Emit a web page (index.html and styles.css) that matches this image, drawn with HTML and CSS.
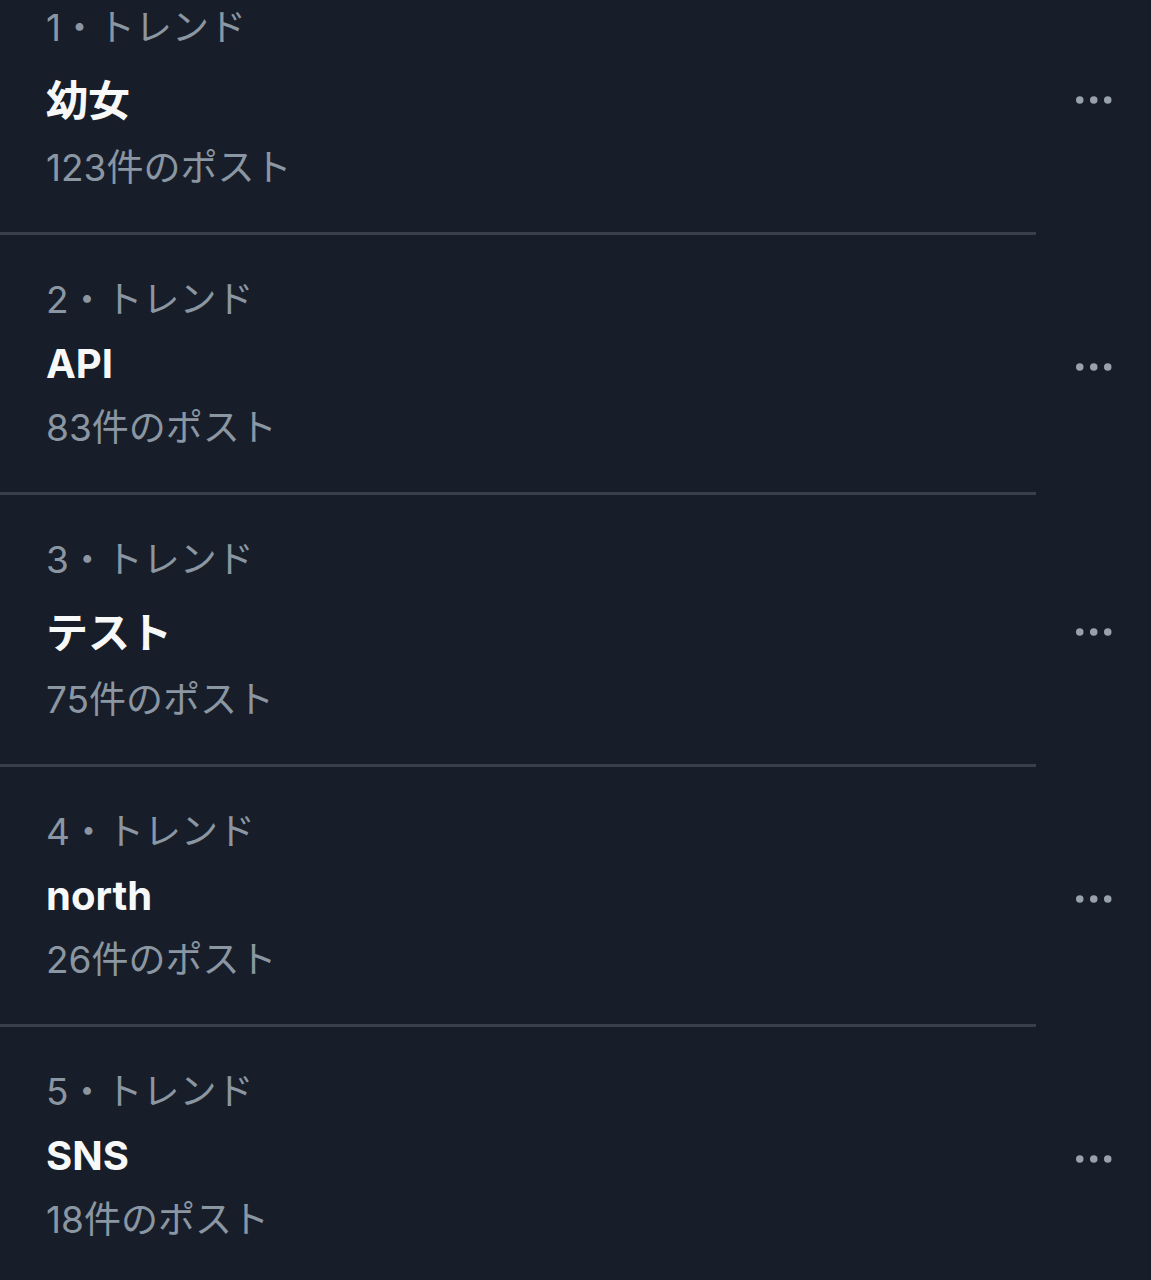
FILE: index.html
```html
<!DOCTYPE html>
<html lang="ja">
<head>
    <meta charset="UTF-8">
    <meta name="viewport" content="width=device-width, initial-scale=1.0">
    <title>トレンド</title>
    <link rel="stylesheet" href="styles.css">
</head>
<body>
    <ul class="trends">
        <li class="trend trend--ja">
            <div class="trend-body">
                <div class="trend-meta">1・トレンド</div>
                <div class="trend-name">幼女</div>
                <div class="trend-count">123件のポスト</div>
            </div>
            <button class="trend-more" aria-label="その他">
                <svg width="36" height="8" viewBox="0 0 36 8"><circle cx="3.75" cy="4" r="3.75"/><circle cx="17.75" cy="4" r="3.75"/><circle cx="31.75" cy="4" r="3.75"/></svg>
            </button>
        </li>
        <li class="trend">
            <div class="trend-body">
                <div class="trend-meta">2・トレンド</div>
                <div class="trend-name">API</div>
                <div class="trend-count">83件のポスト</div>
            </div>
            <button class="trend-more" aria-label="その他">
                <svg width="36" height="8" viewBox="0 0 36 8"><circle cx="3.75" cy="4" r="3.75"/><circle cx="17.75" cy="4" r="3.75"/><circle cx="31.75" cy="4" r="3.75"/></svg>
            </button>
        </li>
        <li class="trend trend--ja">
            <div class="trend-body">
                <div class="trend-meta">3・トレンド</div>
                <div class="trend-name">テスト</div>
                <div class="trend-count">75件のポスト</div>
            </div>
            <button class="trend-more" aria-label="その他">
                <svg width="36" height="8" viewBox="0 0 36 8"><circle cx="3.75" cy="4" r="3.75"/><circle cx="17.75" cy="4" r="3.75"/><circle cx="31.75" cy="4" r="3.75"/></svg>
            </button>
        </li>
        <li class="trend">
            <div class="trend-body">
                <div class="trend-meta">4・トレンド</div>
                <div class="trend-name">north</div>
                <div class="trend-count">26件のポスト</div>
            </div>
            <button class="trend-more" aria-label="その他">
                <svg width="36" height="8" viewBox="0 0 36 8"><circle cx="3.75" cy="4" r="3.75"/><circle cx="17.75" cy="4" r="3.75"/><circle cx="31.75" cy="4" r="3.75"/></svg>
            </button>
        </li>
        <li class="trend">
            <div class="trend-body">
                <div class="trend-meta">5・トレンド</div>
                <div class="trend-name">SNS</div>
                <div class="trend-count">18件のポスト</div>
            </div>
            <button class="trend-more" aria-label="その他">
                <svg width="36" height="8" viewBox="0 0 36 8"><circle cx="3.75" cy="4" r="3.75"/><circle cx="17.75" cy="4" r="3.75"/><circle cx="31.75" cy="4" r="3.75"/></svg>
            </button>
        </li>
    </ul>
</body>
</html>
```

FILE: styles.css
```css
body {
    margin: 0;
    background-color: #181e29;
    font-family: Inter, "Noto Sans CJK JP", sans-serif;
    overflow: hidden;
}
.trends {
    list-style: none;
    margin: -37px 0 0 0;
    padding: 0;
}
.trend {
    display: flex;
    align-items: flex-start;
}
.trend-body {
    width: 1036px;
    box-sizing: border-box;
    padding: 33px 0 32px 46px;
    border-bottom: 3px solid #38404b;
}
.trend-meta,
.trend-count {
    font-size: 37px;
    line-height: 64px;
    color: #8b96a3;
}
.trend-name {
    font-size: 40px;
    line-height: 64px;
    font-weight: 700;
    color: #f7f9f9;
}
.trend--ja .trend-name {
    font-size: 42px;
    line-height: 70px;
    padding-top: 6px;
}
.trend-more {
    margin: 128px 0 0 40px;
    padding: 0;
    border: none;
    background: none;
    line-height: 0;
    fill: #98a2ad;
    cursor: pointer;
}
.trend--ja .trend-more {
    margin-top: 133px;
}
```
